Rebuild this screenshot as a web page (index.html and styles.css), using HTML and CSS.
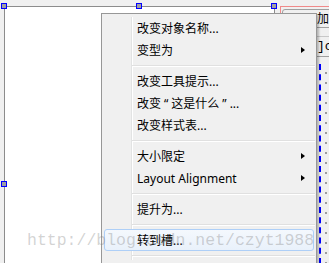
FILE: index.html
```html
<!DOCTYPE html>
<html lang="zh-CN">
<head>
  <meta charset="UTF-8">
  <meta name="viewport" content="width=device-width, initial-scale=1.0">
  <title>Designer 右键菜单</title>
  <link rel="stylesheet" href="styles.css">
</head>
<body>
  <div class="canvas">
    <div class="form"></div>
    <span class="handle h-tl"></span>
    <span class="handle h-tm"></span>
    <span class="handle h-tr"></span>
    <span class="handle h-ml"></span>

    <div class="side">
      <div class="side-btn">加吗</div>
      <div class="side-gap"></div>
      <div class="side-row">]cp</div>
      <div class="side-grid"></div>
    </div>

    <div class="menu">
      <div class="item">改变对象名称...</div>
      <div class="item sub">变型为</div>
      <div class="sep"></div>
      <div class="item">改变工具提示...</div>
      <div class="item">改变<span class="q">“</span>这是什么<span class="q">”</span>...</div>
      <div class="item">改变样式表...</div>
      <div class="sep"></div>
      <div class="item sub">大小限定</div>
      <div class="item sub">Layout Alignment</div>
      <div class="sep"></div>
      <div class="item">提升为...</div>
      <div class="sep"></div>
      <div class="item active">转到槽...</div>
      <div class="sep"></div>
    </div>

    <div class="watermark">http://blog.csdn.net/czyt1988</div>
  </div>
</body>
</html>
```

FILE: styles.css
```css
body {
  margin: 0;
  background: #f0f0f0;
  font-family: "Noto Sans", "Noto Sans CJK SC", sans-serif;
}
.canvas {
  position: relative;
  width: 329px;
  height: 263px;
  overflow: hidden;
}

/* form being edited */
.form {
  position: absolute;
  left: 4px;
  top: 6px;
  width: 269px;
  height: 350px;
  background: #fff;
  border: 1px solid #8c8c8c;
}
.handle {
  position: absolute;
  width: 4px;
  height: 4px;
  background: #a0a0a0;
  border: 1px solid #0000ff;
}
.h-tl { left: 1px; top: 3px; }
.h-tm { left: 136px; top: 3px; }
.h-tr { left: 271px; top: 3px; }
.h-ml { left: 1px; top: 181px; }

/* neighbouring widget on the right */
.side {
  position: absolute;
  left: 280px;
  top: 6px;
  width: 60px;
  height: 270px;
  border-left: 1px solid #f08a8a;
  border-top: 1px solid #f08a8a;
}
.side-btn {
  margin: 2px 0 0 1px;
  height: 17px;
  border: 1px solid #a0a0a0;
  border-radius: 3px;
  padding-left: 34px;
  font-size: 12px;
  line-height: 17px;
  white-space: nowrap;
  overflow: hidden;
  color: #000;
}
.side-gap {
  height: 8px;
  border-bottom: 1px solid #c8c8c8;
}
.side-row {
  height: 19px;
  padding-left: 36px;
  font-family: "Liberation Mono", monospace;
  font-size: 13px;
  line-height: 19px;
  white-space: nowrap;
  overflow: hidden;
  border-bottom: 1px solid #a0a0a0;
}
.side-grid {
  margin: 7px 0 0 38px;
  height: 200px;
  border-left: 2px dashed #0000ff;
  background-image: radial-gradient(circle, #9a9a9a 0.7px, transparent 1px);
  background-size: 10px 10px;
  background-position: 0 4px;
}

/* context menu */
.menu {
  position: absolute;
  left: 101px;
  top: 13px;
  width: 210px;
  padding: 3px 2px;
  background: #f0f0f0;
  border: 1px solid #979797;
  box-shadow: 2px 2px 2px rgba(0, 0, 0, 0.25);
  font-size: 12px;
  color: #000;
}
.menu::before {
  content: "";
  position: absolute;
  left: 29px;
  top: 3px;
  bottom: 3px;
  width: 0;
  border-left: 1px solid #e2e3e3;
  border-right: 1px solid #fff;
}
.item {
  position: relative;
  display: flex;
  align-items: center;
  height: 22px;
  padding-left: 33px;
  box-sizing: border-box;
  white-space: nowrap;
}
.item .q {
  margin: 0 3px;
}
.item.sub::after {
  content: "";
  margin-left: auto;
  margin-right: 9px;
  border-left: 4px solid #000;
  border-top: 3.5px solid transparent;
  border-bottom: 3.5px solid transparent;
}
.item.active {
  padding-left: 32px;
  border: 1px solid #aecff7;
  border-radius: 3px;
  background: linear-gradient(#f4f8fd, #e9f1fb);
}
.sep {
  position: relative;
  height: 9px;
  margin-left: 28px;
  margin-right: -1px;
}
.sep::before {
  content: "";
  position: absolute;
  left: 0;
  right: 0;
  top: 4px;
  height: 1px;
  background: #e0e0e0;
  border-bottom: 1px solid #fff;
}

.watermark {
  position: absolute;
  left: 27px;
  top: 231px;
  font-family: "Liberation Mono", monospace;
  font-size: 16.5px;
  line-height: 20px;
  color: rgba(128, 128, 128, 0.35);
  white-space: nowrap;
}
```
